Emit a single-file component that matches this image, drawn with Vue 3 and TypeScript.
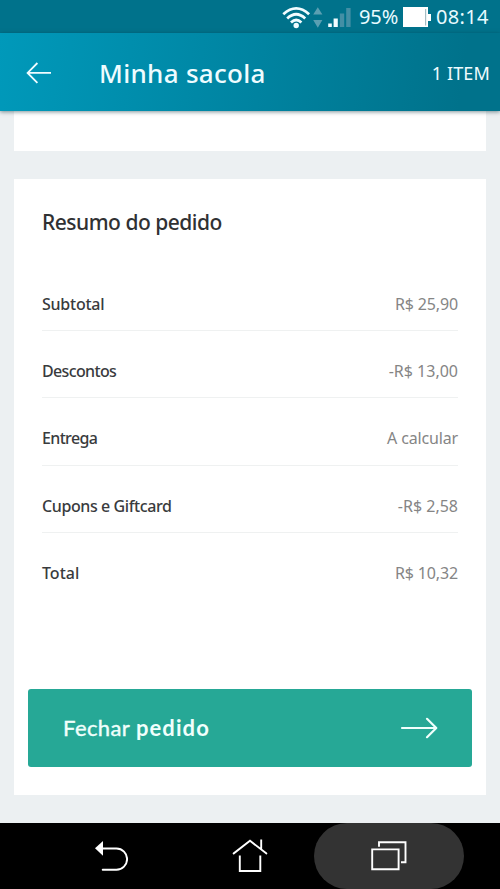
<script setup lang="ts">
interface SummaryRow {
  key: string
  label: string
  value: string
}

const rows: SummaryRow[] = [
  { key: 'subtotal', label: 'Subtotal', value: 'R$ 25,90' },
  { key: 'descontos', label: 'Descontos', value: '-R$ 13,00' },
  { key: 'entrega', label: 'Entrega', value: 'A calcular' },
  { key: 'cupons', label: 'Cupons e Giftcard', value: '-R$ 2,58' },
  { key: 'total', label: 'Total', value: 'R$ 10,32' },
]
</script>

<template>
  <div class="screen">
    <div class="status">
      <svg class="signals" width="72" height="24" viewBox="0 0 72 24">
        <g fill="none" stroke="#f1fcff" stroke-width="2.8">
          <path d="M1.3 9.2 Q14.2 -2.4 27.1 9.2" />
          <path d="M5.2 13.4 Q14.2 5 23.2 13.4" />
          <path d="M9 17.5 Q14.2 12.6 19.4 17.5" />
        </g>
        <circle cx="14.2" cy="20.5" r="2.7" fill="#f1fcff" />
        <path d="M35.8 2.2 L40.4 9.5 H31.2 Z M31.2 15 H40.4 L35.8 22.7 Z" fill="#5a9fb2" />
        <path d="M46.2 18.4h3.6v3.6h-3.6z M51.6 13.5h4.2V22h-4.2z" fill="#f1fcff" />
        <path d="M57.8 8.4h4.4V22h-4.4z M64.2 3h4.4v19h-4.4z" fill="#438fa5" />
      </svg>
      <span class="percent">95%</span>
      <svg class="battery" width="29" height="20" viewBox="0 0 29 20">
        <path d="M0 0H25V7H28V14H25V20H0Z" fill="#fff" />
        <path d="M22.6 2V18.5" stroke="#a5bdc4" stroke-width="1.2" />
      </svg>
      <span class="clock">08:14</span>
    </div>

    <header class="toolbar">
      <svg class="back" width="26" height="22" viewBox="0 0 26 22" fill="none" stroke="#effcff" stroke-width="1.8">
        <path d="M25 10.9H1.8M11.4 1 1.6 10.9 11.4 20.8" />
      </svg>
      <h1>Minha sacola</h1>
      <span class="count">1 ITEM</span>
    </header>

    <main>
      <section class="card previous"></section>
      <section class="card summary">
        <h2>Resumo do pedido</h2>
        <dl>
          <div v-for="row in rows" :key="row.key" class="row">
            <dt :class="row.key">{{ row.label }}</dt>
            <dd :class="row.key">{{ row.value }}</dd>
          </div>
        </dl>
        <button type="button" class="checkout">
          <span><span class="verb">Fechar</span> <b>pedido</b></span>
          <svg width="38" height="22" viewBox="0 0 38 22" fill="none" stroke="#f0fffc" stroke-width="2.2" stroke-linecap="round" stroke-linejoin="round">
            <path d="M2 11H36M27 1.8 36.3 11 27 20.2" />
          </svg>
        </button>
      </section>
    </main>

    <nav class="system">
      <div class="key">
        <svg width="34" height="32" viewBox="0 0 34 32" fill="none" stroke="#fff" stroke-width="1.9" stroke-linecap="round">
          <path d="M8 8.5H22.5A10.6 10.6 0 0 1 22.5 29.7H8.7" />
          <path d="M1 8.3 9 .9V15.8Z" fill="#fff" stroke="none" />
        </svg>
      </div>
      <div class="key">
        <svg width="36" height="34" viewBox="0 0 36 34" fill="none" stroke="#fff" stroke-width="1.9" stroke-linecap="square">
          <path d="M1.8 14.3 18 1.8 34.2 14.3M29.2 9V1.5M7.8 17.5V32H28.3V17.5" />
        </svg>
      </div>
      <div class="key active">
        <svg width="36" height="30" viewBox="0 0 36 30" fill="none" stroke="#fff" stroke-width="1.9">
          <path d="M1.2 8.4H27.6V28.2H1.2ZM8 5.8V1.2H34.5V21.3H30" />
        </svg>
      </div>
    </nav>
  </div>
</template>

<style>
body {
  margin: 0;
}
</style>

<style scoped>
.screen {
  width: 500px;
  height: 889px;
  display: flex;
  flex-direction: column;
  overflow: hidden;
  background: #ecf0f2;
  font-family: "Noto Sans", sans-serif;
}

.status {
  height: 33px;
  flex: none;
  display: flex;
  align-items: center;
  justify-content: flex-end;
  box-sizing: border-box;
  padding: 1px 11px 0 0;
  background: #00728b;
  color: #e8fbff;
  font-size: 20px;
  line-height: 32px;
}

.signals {
  margin-right: 5px;
}

.percent {
  width: 43px;
  margin-right: 1px;
  letter-spacing: -0.1px;
  white-space: nowrap;
}

.battery {
  margin-right: 4px;
}

.clock {
  width: 53px;
  letter-spacing: 0.3px;
}

.toolbar {
  position: relative;
  z-index: 1;
  height: 78px;
  flex: none;
  display: flex;
  align-items: center;
  box-sizing: border-box;
  padding: 1px 10px 0 26px;
  background: linear-gradient(97deg, #0099ba 0%, #0083a0 52%, #00728b 92%);
  box-shadow: 0 1px 4px rgba(0, 40, 50, 0.5);
  color: #effcff;
}

h1 {
  margin: 0 auto 0 47px;
  font-size: 26px;
  line-height: 34px;
  font-weight: 500;
  letter-spacing: 0.3px;
}

.count {
  font-size: 18px;
  line-height: 26px;
  letter-spacing: 0.15px;
  white-space: nowrap;
}

main {
  flex: 1;
  display: flex;
  flex-direction: column;
  gap: 28px;
  padding: 0 14px;
}

.card {
  background: #fff;
}

.previous {
  height: 40px;
}

.summary {
  height: 616px;
  box-sizing: border-box;
  display: flex;
  flex-direction: column;
  padding: 28px 14px;
}

h2 {
  margin: -1px 14px 1px;
  color: #303133;
  font-size: 21px;
  line-height: 32px;
  font-weight: 500;
  letter-spacing: -0.5px;
}

dl {
  margin: 38px 14px 0;
}

.row {
  height: 67.4px;
  box-sizing: border-box;
  display: flex;
  align-items: center;
  justify-content: space-between;
  padding-top: 14px;
  border-bottom: 1.5px solid #eff1f1;
  font-size: 16px;
  line-height: 24px;
}

.row:first-child {
  height: 53.8px;
  padding-top: 1px;
}

.row:last-child {
  border-color: transparent;
}

dt {
  color: #393b3d;
  font-weight: 500;
  letter-spacing: -0.4px;
}

dt.subtotal {
  letter-spacing: -0.25px;
}

dt.descontos,
dt.entrega {
  letter-spacing: -0.65px;
}

dt.total {
  letter-spacing: 0;
}

dd {
  margin: 0;
  color: #858585;
  letter-spacing: -0.15px;
}

dd.descontos,
dd.cupons {
  letter-spacing: 0;
}

.checkout {
  height: 78px;
  margin-top: auto;
  display: flex;
  align-items: center;
  justify-content: space-between;
  padding: 0 34px 0 35px;
  border: 0;
  border-radius: 3px;
  background: #26a896;
  color: #f0fffc;
  font-family: Lato, sans-serif;
  font-size: 22px;
  line-height: 30px;
}

.verb {
  letter-spacing: 0.4px;
  -webkit-text-stroke: 0.4px currentColor;
}

.checkout b {
  font-weight: 700;
  letter-spacing: 1.1px;
}

.system {
  height: 66.5px;
  flex: none;
  display: flex;
  align-items: center;
  gap: 0;
  padding-left: 36px;
  box-sizing: border-box;
  background: #000;
}

.key {
  width: 139px;
  height: 66px;
  display: flex;
  align-items: center;
  justify-content: center;
}

.key:first-child {
  width: 150px;
}

.key:nth-child(2) {
  width: 128px;
}

.key.active {
  width: 150px;
  border-radius: 34px;
  background: #333;
}
</style>
